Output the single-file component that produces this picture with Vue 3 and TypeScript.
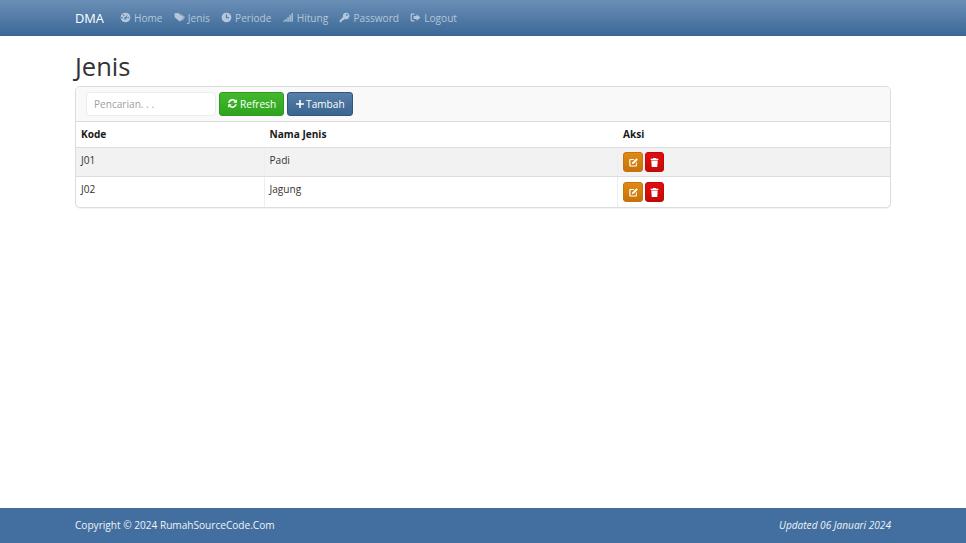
<script setup lang="ts">
type NavItem = { label: string; icon: string }
type Row = { kode: string; nama: string }

const navItems: NavItem[] = [
  { label: 'Home', icon: 'dashboard' },
  { label: 'Jenis', icon: 'tags' },
  { label: 'Periode', icon: 'clock' },
  { label: 'Hitung', icon: 'signal' },
  { label: 'Password', icon: 'key' },
  { label: 'Logout', icon: 'logout' },
]

const rows: Row[] = [
  { kode: 'J01', nama: 'Padi' },
  { kode: 'J02', nama: 'Jagung' },
]
</script>

<template>
  <div class="page">
    <nav class="navbar">
      <div class="container nav-inner">
        <a class="brand">DMA</a>
        <a v-for="item in navItems" :key="item.label" class="nav-link">
          <svg class="nav-icon" viewBox="0 0 14 14" aria-hidden="true">
            <template v-if="item.icon === 'dashboard'">
              <path fill-rule="evenodd" d="M7 .8a6.2 6.2 0 1 1 0 12.4A6.2 6.2 0 0 1 7 .8zM3.4 7.2a1 1 0 1 0 0 .1zM5.6 4a.9.9 0 1 0 0 .1zM9.8 3.4 6.5 6.6a1.5 1.5 0 1 0 1.7 1.3zM11.3 7a.9.9 0 1 0 0 .1z" fill="currentColor" />
            </template>
            <template v-else-if="item.icon === 'tags'">
              <path d="M.6 1.6 5.4 1.2l6.2 5c.5.4.5 1 .1 1.4l-3.4 4c-.4.5-1 .5-1.4.1L.9 6.6z" fill="currentColor" />
              <path d="M7.4 1.2l5.8 4.6c.6.5.6 1.1.2 1.6l-3 3.6-.6-.5 2.5-3.2c.3-.4.2-.8-.2-1.1z" fill="currentColor" />
            </template>
            <template v-else-if="item.icon === 'clock'">
              <path fill-rule="evenodd" d="M7 .8a6.2 6.2 0 1 1 0 12.4A6.2 6.2 0 0 1 7 .8zM6.2 3.2v4.6h4V6.5H7.7V3.2z" fill="currentColor" />
            </template>
            <template v-else-if="item.icon === 'signal'">
              <rect x="0.4" y="10.6" width="1.7" height="1.8" fill="currentColor" />
              <rect x="3" y="8.8" width="1.7" height="3.6" fill="currentColor" />
              <rect x="5.6" y="6.6" width="1.7" height="5.8" fill="currentColor" />
              <rect x="8.2" y="4" width="1.7" height="8.4" fill="currentColor" />
              <rect x="10.8" y="1.6" width="1.7" height="10.8" fill="currentColor" />
            </template>
            <template v-else-if="item.icon === 'key'">
              <path fill-rule="evenodd" d="M9 .8a4.2 4.2 0 1 1-1.7 8L6 10.1H4.6v1.4H3.2v1.7H.8v-2.5l4.3-4.4A4.2 4.2 0 0 1 9 .8zm1.1 1.9a1.1 1.1 0 1 0 0 2.2 1.1 1.1 0 0 0 0-2.2z" fill="currentColor" />
            </template>
            <template v-else>
              <path d="M5.6 2H2.2C1.3 2 .8 2.5.8 3.4v7.2c0 .9.5 1.4 1.4 1.4h3.4v-1.4H2.9c-.4 0-.6-.2-.6-.6V4c0-.4.2-.6.6-.6h2.7z" fill="currentColor" />
              <path d="M8.4 2.8 13.4 7l-5 4.2V8.8H4.6V5.2h3.8z" fill="currentColor" />
            </template>
          </svg>
          <span>{{ item.label }}</span>
        </a>
      </div>
    </nav>

    <main class="container content">
      <h1 class="title">Jenis</h1>

      <section class="panel">
        <div class="panel-heading">
          <input class="search" type="text" placeholder="Pencarian. . ." />
          <button class="btn btn-green" type="button">
            <svg class="btn-icon" viewBox="0 0 14 14" aria-hidden="true">
              <path d="M7.2 1.3c1.6 0 3 .7 3.9 1.8L12.6 1.6v4.6H8l1.7-1.7A3.6 3.6 0 0 0 3.5 6H1.4a5.8 5.8 0 0 1 5.8-4.7zM1.4 7.8H6L4.3 9.5a3.6 3.6 0 0 0 6.2-1.5h2.1a5.8 5.8 0 0 1-9.7 2.9L1.4 12.4z" fill="currentColor" />
            </svg>
            Refresh
          </button>
          <button class="btn btn-blue" type="button">
            <svg class="btn-icon" viewBox="0 0 14 14" aria-hidden="true">
              <path d="M5.9 1.5h2.2v4.4h4.4v2.2H8.1v4.4H5.9V8.1H1.5V5.9h4.4z" fill="currentColor" />
            </svg>
            Tambah
          </button>
        </div>

        <table class="table">
          <colgroup>
            <col class="col-kode" />
            <col class="col-nama" />
            <col />
          </colgroup>
          <thead>
            <tr>
              <th>Kode</th>
              <th>Nama Jenis</th>
              <th>Aksi</th>
            </tr>
          </thead>
          <tbody>
            <tr v-for="row in rows" :key="row.kode">
              <td>{{ row.kode }}</td>
              <td>{{ row.nama }}</td>
              <td>
                <div class="actions">
                  <a class="btn-xs btn-orange">
                    <svg viewBox="0 0 14 14" aria-hidden="true">
                      <path d="M2.8 2.6h5.4L7 3.9H3.6c-.3 0-.4.1-.4.4v6c0 .3.1.4.4.4h6c.3 0 .4-.1.4-.4V7.6l1.3-1.3v4.5c0 .9-.5 1.3-1.3 1.3H2.8c-.8 0-1.2-.4-1.2-1.3V3.9c0-.9.4-1.3 1.2-1.3z" fill="currentColor" />
                      <path d="M10.8 1.6l1.8 1.8-5.2 5.2-2.4.6.6-2.4z" fill="currentColor" />
                    </svg>
                  </a>
                  <a class="btn-xs btn-red">
                    <svg viewBox="0 0 14 14" aria-hidden="true">
                      <path d="M5.2 1.2h3.6l.5 1h2.6v1.6H2.1V2.2h2.6zM2.9 4.6h8.2l-.6 8.2h-7z" fill="currentColor" />
                    </svg>
                  </a>
                </div>
              </td>
            </tr>
          </tbody>
        </table>
      </section>
    </main>

    <footer class="footer">
      <div class="container footer-inner">
        <span>Copyright © 2024 RumahSourceCode.Com</span>
        <em>Updated 06 Januari 2024</em>
      </div>
    </footer>
  </div>
</template>

<style>
html,
body {
  margin: 0;
  background: #fff;
}
</style>

<style scoped>
.page {
  display: flex;
  flex-direction: column;
  min-height: 543px;
  font-family: 'Open Sans', 'Noto Sans', sans-serif;
  font-size: 10.1px;
  color: #333;
}

.container {
  box-sizing: border-box;
  width: 816px;
  margin: 0 auto;
}

.navbar {
  height: 36px;
  box-sizing: border-box;
  border-bottom: 1px solid #3a6592;
  background: linear-gradient(to bottom, #6a8fb6 0, #3c6997 100%);
}

.nav-inner {
  display: flex;
  align-items: center;
  height: 35px;
}

.brand {
  width: 45px;
  font-size: 12.8px;
  color: #fff;
}

.nav-link {
  display: flex;
  align-items: center;
  gap: 3px;
  margin-right: 11.3px;
  font-size: 10.1px;
  color: #b4c6da;
}

.nav-icon {
  width: 11px;
  height: 11px;
}

.content {
  flex: 1;
}

.title {
  margin: 14px 0 4px;
  font-size: 25.5px;
  font-weight: 400;
  line-height: 32px;
  color: #333;
}

.panel {
  border: 1px solid #ddd;
  border-radius: 5px;
  background: #fff;
  box-shadow: 0 1px 1px rgba(0, 0, 0, 0.05);
  overflow: hidden;
}

.panel-heading {
  display: flex;
  align-items: center;
  gap: 3px;
  height: 35px;
  box-sizing: border-box;
  padding: 0 10px 1px;
  background: #f9f9f9;
  border-bottom: 1px solid #ddd;
}

.search {
  box-sizing: border-box;
  width: 130px;
  height: 24px;
  padding: 0 7px;
  border: 1px solid #ececec;
  border-radius: 4px;
  background: #fff;
  font: inherit;
  color: #555;
  outline: none;
}

.search::placeholder {
  color: #a0a0a0;
  opacity: 1;
}

.btn {
  display: inline-flex;
  align-items: center;
  justify-content: center;
  gap: 2px;
  box-sizing: border-box;
  height: 24px;
  padding: 0 7px;
  border-radius: 3px;
  font: inherit;
  color: #fff;
}

.btn-icon {
  width: 11px;
  height: 11px;
}

.btn-green {
  border: 1px solid #2e9a1f;
  background: linear-gradient(to bottom, #43b92e 0, #2ea41e 100%);
}

.btn-blue {
  gap: 1px;
  border: 1px solid #30557f;
  background: linear-gradient(to bottom, #567ea9 0, #39658f 100%);
}

.btn-blue .btn-icon {
  width: 10px;
  height: 10px;
}

.table {
  width: 100%;
  border-collapse: collapse;
  table-layout: fixed;
}

.col-kode {
  width: 188px;
}

.col-nama {
  width: 353.5px;
}

th,
td {
  box-sizing: border-box;
  padding: 5px;
  text-align: left;
  vertical-align: top;
  line-height: 16px;
  border-left: 1px solid #eee;
}

th:first-child,
td:first-child {
  border-left: 0;
}

th {
  height: 25px;
  padding-top: 4px;
  font-weight: 700;
  color: #1a1a1a;
  border-bottom: 1px solid #ddd;
  border-left-color: transparent;
}

td {
  height: 29px;
  padding-top: 4px;
  padding-bottom: 4px;
  border-bottom: 1px solid #ddd;
}

tbody tr:last-child td {
  height: 30px;
  border-bottom: 0;
}

tbody tr:last-child td:last-child {
  padding-top: 5px;
}

tbody tr:nth-child(odd) td {
  background: #f2f2f2;
}

.actions {
  display: flex;
  gap: 2px;
}

.btn-xs {
  display: flex;
  align-items: center;
  justify-content: center;
  box-sizing: border-box;
  height: 20px;
  border-radius: 3px;
  color: #fff;
}

.btn-xs svg {
  width: 11px;
  height: 11px;
}

.btn-orange {
  width: 20px;
  border: 1px solid #c77410;
  background: linear-gradient(to bottom, #e08a14 0, #c87308 100%);
}

.btn-red {
  width: 19px;
  border: 1px solid #bd0a0a;
  background: linear-gradient(to bottom, #e30f0f 0, #c60808 100%);
}

.footer {
  height: 35px;
  background: #426f9f;
  color: #f0f3f7;
}

.footer-inner {
  display: flex;
  align-items: center;
  justify-content: space-between;
  height: 34px;
}
</style>
